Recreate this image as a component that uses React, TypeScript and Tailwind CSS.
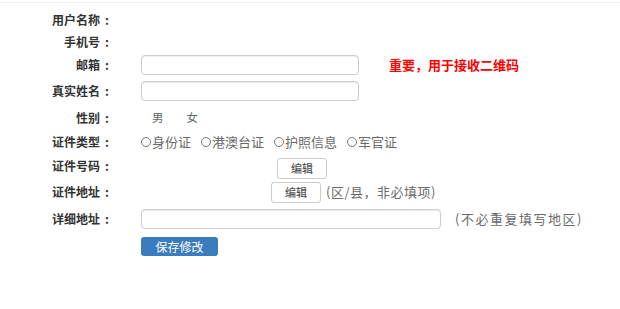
import React from 'react';

// Account profile form (用户资料)
const FONT = { fontFamily: '"Noto Sans CJK SC", "Noto Sans", sans-serif' };

function Label({ text }: { text: string }) {
  return (
    <div className="w-[109px] shrink-0 text-right text-[12px] font-bold text-[#333] leading-none">
      {text}
      <span className="ml-[5px]">:</span>
    </div>
  );
}

function TextInput({ width }: { width: string }) {
  return (
    <input
      type="text"
      className={`${width} h-[20px] rounded-[4px] border border-[#ccc] bg-white shadow-[inset_0_1px_1px_rgba(0,0,0,0.075)] outline-none`}
    />
  );
}

function EditButton() {
  return (
    <button className="h-[21px] w-[50px] rounded-[3px] border border-[#ccc] bg-white text-[11px] font-medium text-[#555] leading-none">
      编辑
    </button>
  );
}

export default function App() {
  const idTypes = ['身份证', '港澳台证', '护照信息', '军官证'];

  return (
    <div className="w-[620px] h-[309px] bg-white overflow-hidden" style={FONT}>
      <div className="h-[3px] border-b border-[#f0f0f0]" />
      <div className="flex flex-col pt-[6px]">
        <div className="flex h-[22px] items-center">
          <Label text="用户名称" />
        </div>
        <div className="flex h-[22px] items-center">
          <Label text="手机号" />
        </div>
        <div className="flex h-[24px] items-center">
          <Label text="邮箱" />
          <div className="ml-[32px] flex items-center">
            <TextInput width="w-[218px]" />
            <span className="ml-[30px] text-[13px] font-bold text-[#ff0000]">重要，用于接收二维码</span>
          </div>
        </div>
        <div className="flex h-[28px] items-center">
          <Label text="真实姓名" />
          <div className="ml-[32px]">
            <TextInput width="w-[218px]" />
          </div>
        </div>
        <div className="flex h-[26px] items-center">
          <Label text="性别" />
          <div className="ml-[43px] flex gap-[23px] text-[11.5px] text-[#666]">
            <span>男</span>
            <span>女</span>
          </div>
        </div>
        <div className="flex h-[22px] items-center">
          <Label text="证件类型" />
          <div className="ml-[32px] flex gap-[10px] text-[13px] text-[#6a6a6a]">
            {idTypes.map((t) => (
              <span key={t} className="flex items-center">
                <span className="mr-[1px] inline-block h-[10px] w-[10px] rounded-full border border-[#777]" />
                {t}
              </span>
            ))}
          </div>
        </div>
        <div className="flex h-[26px] items-center">
          <Label text="证件号码" />
          <div className="ml-[168px]">
            <EditButton />
          </div>
        </div>
        <div className="flex h-[26px] items-center">
          <Label text="证件地址" />
          <div className="ml-[162px] flex items-center">
            <EditButton />
            <span className="ml-[5px] text-[13px] tracking-[0.5px] text-[#6a6a6a]">(区/县，非必填项)</span>
          </div>
        </div>
        <div className="flex h-[28px] items-center">
          <Label text="详细地址" />
          <div className="ml-[32px] flex items-center">
            <TextInput width="w-[300px]" />
            <span className="ml-[14px] text-[13px] tracking-[1.5px] text-[#6a6a6a]">(不必重复填写地区)</span>
          </div>
        </div>
        <div className="mt-[4px] flex pl-[141px]">
          <button className="h-[19px] w-[77px] rounded-[3px] bg-[#3a7cbd] text-[12px] text-white leading-none">
            保存修改
          </button>
        </div>
      </div>
    </div>
  );
}
